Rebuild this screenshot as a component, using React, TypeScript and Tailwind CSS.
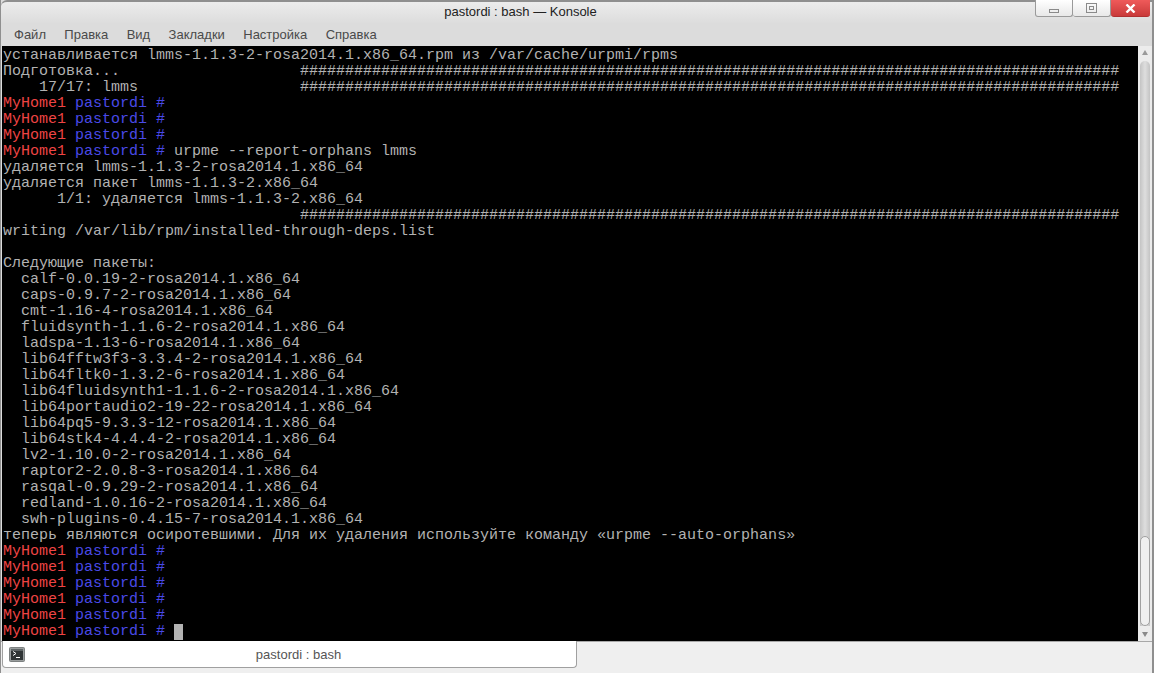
const HASHES = "#".repeat(91);

type Line = string | { prompt: true; cmd?: string; cursor?: boolean };

const lines: Line[] = [
    "устанавливается lmms-1.1.3-2-rosa2014.1.x86_64.rpm из /var/cache/urpmi/rpms",
    "Подготовка...                    " + HASHES,
    "    17/17: lmms                  " + HASHES,
    { prompt: true },
    { prompt: true },
    { prompt: true },
    { prompt: true, cmd: "urpme --report-orphans lmms" },
    "удаляется lmms-1.1.3-2-rosa2014.1.x86_64",
    "удаляется пакет lmms-1.1.3-2.x86_64",
    "      1/1: удаляется lmms-1.1.3-2.x86_64",
    "                                 " + HASHES,
    "writing /var/lib/rpm/installed-through-deps.list",
    "",
    "Следующие пакеты:",
    "  calf-0.0.19-2-rosa2014.1.x86_64",
    "  caps-0.9.7-2-rosa2014.1.x86_64",
    "  cmt-1.16-4-rosa2014.1.x86_64",
    "  fluidsynth-1.1.6-2-rosa2014.1.x86_64",
    "  ladspa-1.13-6-rosa2014.1.x86_64",
    "  lib64fftw3f3-3.3.4-2-rosa2014.1.x86_64",
    "  lib64fltk0-1.3.2-6-rosa2014.1.x86_64",
    "  lib64fluidsynth1-1.1.6-2-rosa2014.1.x86_64",
    "  lib64portaudio2-19-22-rosa2014.1.x86_64",
    "  lib64pq5-9.3.3-12-rosa2014.1.x86_64",
    "  lib64stk4-4.4.4-2-rosa2014.1.x86_64",
    "  lv2-1.10.0-2-rosa2014.1.x86_64",
    "  raptor2-2.0.8-3-rosa2014.1.x86_64",
    "  rasqal-0.9.29-2-rosa2014.1.x86_64",
    "  redland-1.0.16-2-rosa2014.1.x86_64",
    "  swh-plugins-0.4.15-7-rosa2014.1.x86_64",
    "теперь являются осиротевшими. Для их удаления используйте команду «urpme --auto-orphans»",
    { prompt: true },
    { prompt: true },
    { prompt: true },
    { prompt: true },
    { prompt: true },
    { prompt: true, cursor: true },
];

const menu = ["Файл", "Правка", "Вид", "Закладки", "Настройка", "Справка"];

function TerminalLine({ line }: { line: Line }) {
    if (typeof line === "string") {
        return <div className="h-4 whitespace-pre">{line}</div>;
    }
    return (
        <div className="h-4 whitespace-pre flex items-center">
            <span className="text-[#ee4444]">MyHome1 </span>
            <span className="text-[#4a4ae8]">pastordi # </span>
            {line.cmd && <span>{line.cmd}</span>}
            {line.cursor && <span className="inline-block w-[9px] h-4 bg-[#b2b2b2]" />}
        </div>
    );
}

export default function App() {
    return (
        <div className="w-[1154px] h-[673px] flex flex-col overflow-hidden bg-[#dcdcdc] font-['Liberation_Sans',sans-serif] border-r-2 border-l border-[#8f8f8f]">
            <div className="h-6 shrink-0 flex bg-gradient-to-b from-[#ececec] to-[#dcdcdc] border-t-2 border-[#8f8f8f] rounded-tl-md">
                <div className="flex-1 text-center text-[13px] leading-[20px] text-[#222] pl-[5px]">
                    pastordi : bash — Konsole
                </div>
                <div className="flex h-[17px] mr-[2px] -mt-[2px]">
                    <div className="w-[38px] bg-gradient-to-b from-white to-[#e8e8e8] border border-t-0 border-[#9a9a9a] rounded-b-[3px] flex items-center justify-center">
                        <div className="w-[10px] h-[4px] border border-[#8a8a8a] mt-[6px]" />
                    </div>
                    <div className="w-[38px] bg-gradient-to-b from-white to-[#e8e8e8] border border-l-0 border-t-0 border-[#9a9a9a] rounded-b-[3px] flex items-center justify-center">
                        <div className="w-[11px] h-[10px] border border-[#8a8a8a] flex items-center justify-center">
                            <div className="w-[5px] h-[4px] border border-[#8a8a8a]" />
                        </div>
                    </div>
                    <div className="w-[39px] bg-gradient-to-b from-[#ef5a5a] to-[#c93a3a] rounded-b-[3px] border-b border-[#b03030] flex items-center justify-center">
                        <svg width="11" height="9" viewBox="0 0 11 9">
                            <path d="M1.5 0.5 L9.5 8.5 M9.5 0.5 L1.5 8.5" stroke="#fff" strokeWidth="2.4" />
                        </svg>
                    </div>
                </div>
            </div>

            <div className="h-[22px] shrink-0 flex items-center text-[13px] text-[#4a4a4a] pl-[13px] gap-[18.4px]">
                {menu.map((m) => (
                    <span key={m}>{m}</span>
                ))}
            </div>

            <div className="h-[595px] shrink-0 flex ml-[1px]">
                <div className="flex-1 bg-black pl-[1px] pt-[2px] overflow-hidden font-['Liberation_Mono',monospace] text-[15px] leading-4 text-[#b2b2b2]">
                    {lines.map((l, i) => (
                        <TerminalLine key={i} line={l} />
                    ))}
                </div>
                <div className="w-[14px] shrink-0 bg-[#ececec] flex flex-col items-center">
                    <div className="mt-[4px] w-0 h-0 border-x-[3px] border-x-transparent border-b-[5px] border-b-[#9a9a9a]" />
                    <div className="mt-[6px] w-[10px] flex-1 bg-gradient-to-r from-[#c4c4c4] via-[#dedede] to-[#c4c4c4] rounded-t-[5px] relative">
                        <div className="absolute left-0 right-0 bottom-0 h-[90px] bg-[#efefef] border border-[#a0a0a0] rounded-[5px]" />
                    </div>
                    <div className="mt-[6px] mb-[4px] w-0 h-0 border-x-[3px] border-x-transparent border-t-[5px] border-t-[#8a8a8a]" />
                </div>
            </div>

            <div className="flex-1 flex bg-[#efefef] border-t border-[#a8a8a8]">
                <div className="ml-[1px] w-[575px] h-[27px] -mt-px bg-white border border-t-0 border-[#a0a0a0] rounded-b-[4px] flex items-center">
                    <svg className="ml-[6px]" width="16" height="15" viewBox="0 0 16 15">
                        <rect x="0.5" y="0.5" width="15" height="14" rx="1" fill="#9a9e9e" stroke="#7d8181" />
                        <rect x="2" y="2" width="12" height="11" fill="#2f3435" />
                        <rect x="2" y="2" width="12" height="2" fill="#5d6364" />
                        <path d="M4 4.5 L7 6.5 L4 8.5" stroke="#fff" fill="none" />
                        <path d="M7 10.5 H11" stroke="#fff" />
                    </svg>
                    <span className="flex-1 text-center text-[13px] text-[#555] mt-[1px] pr-[4px]">pastordi : bash</span>
                </div>
            </div>
        </div>
    );
}
